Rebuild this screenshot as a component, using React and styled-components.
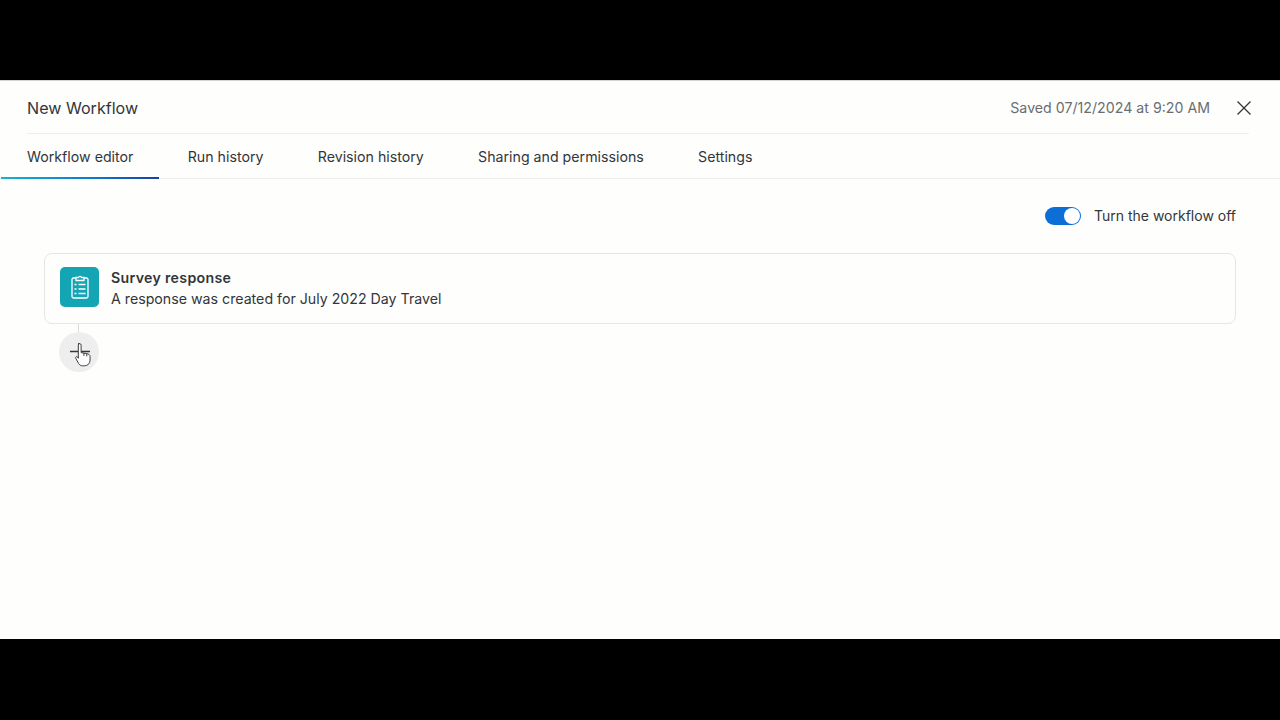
import React from "react";
import styled, { createGlobalStyle } from "styled-components";

const GlobalStyle = createGlobalStyle`
  html, body {
    margin: 0;
    padding: 0;
    background: #000;
  }
  body {
    font-family: Inter, "Open Sans", sans-serif;
  }
`;

const Page = styled.div`
  width: 1280px;
  height: 720px;
  padding: 80px 0 81px;
  box-sizing: border-box;
  background: #000;
  overflow: hidden;
`;

const Panel = styled.main`
  height: 559px;
  background: #fefefd;
  border-top: 1px solid #d4d4d4;
  box-sizing: border-box;
`;

const TitleRow = styled.header`
  height: 53px;
  margin: 0 31px 0 27px;
  display: flex;
  align-items: center;
  justify-content: space-between;
  border-bottom: 1px solid #eeeeee;
  box-sizing: border-box;
`;

const Title = styled.h1`
  margin: 0;
  padding-top: 2px;
  font-size: 16.1px;
  font-weight: 400;
  color: #32363a;
`;

const SaveBox = styled.div`
  display: flex;
  align-items: center;
  gap: 25px;
  margin-right: -4px;
`;

const Saved = styled.span`
  font-size: 14.2px;
  color: #6a6d70;
`;

const Close = styled.button`
  width: 18px;
  height: 18px;
  margin-top: 1px;
  padding: 0;
  border: 0;
  background: none;
  display: flex;
  align-items: center;
  justify-content: center;
`;

const Tabs = styled.nav`
  height: 45px;
  padding-left: 1px;
  display: flex;
  gap: 2.3px;
  border-bottom: 1px solid #eeeeee;
  box-sizing: border-box;
`;

const Tab = styled.a`
  position: relative;
  padding: 0 26px;
  display: flex;
  align-items: center;
  font-size: 14.2px;
  color: #32363a;
  white-space: nowrap;

  ${({ $active }) =>
    $active &&
    `
    &::after {
      content: "";
      position: absolute;
      left: 0;
      right: 0;
      bottom: -1px;
      height: 2px;
      background: linear-gradient(90deg, #12b5cf 0%, #0b78cf 60%, #1b3fa5 100%);
    }
  `}
`;

const Body = styled.section`
  padding: 27px 44px 0;
`;

const ToggleRow = styled.div`
  display: flex;
  align-items: center;
  justify-content: flex-end;
  gap: 13px;
  height: 20px;
  margin-bottom: 27px;
`;

const Toggle = styled.span`
  width: 36px;
  height: 18px;
  border-radius: 9px;
  background: #0b6fd6;
  display: flex;
  align-items: center;
  justify-content: flex-end;
  padding-right: 1px;
  box-sizing: border-box;
`;

const Knob = styled.span`
  width: 16px;
  height: 16px;
  border-radius: 50%;
  background: #fff;
`;

const ToggleLabel = styled.span`
  padding-bottom: 2px;
  font-size: 14px;
  color: #32363a;
`;

const Card = styled.article`
  height: 71px;
  border: 1px solid #e6e6e6;
  border-radius: 8px;
  box-sizing: border-box;
  padding: 0 15px 3px;
  display: flex;
  align-items: center;
  gap: 12px;
`;

const IconTile = styled.div`
  width: 39px;
  height: 40px;
  border-radius: 5px;
  background: #14a5b5;
  display: flex;
  align-items: center;
  justify-content: center;
`;

const CardText = styled.div`
  padding-top: 2px;
  display: flex;
  flex-direction: column;
  gap: 1px;
  font-size: 14.2px;
  line-height: 20px;
  color: #32363a;
`;

const CardTitle = styled.strong`
  font-weight: 600;
  letter-spacing: 0.3px;
`;

const AddColumn = styled.div`
  width: 40px;
  margin-left: 15px;
  display: flex;
  flex-direction: column;
  align-items: center;
`;

const Connector = styled.div`
  width: 1px;
  height: 8px;
  margin-right: 1px;
  background: #dcdcdc;
`;

const AddButton = styled.button`
  position: relative;
  width: 40px;
  height: 40px;
  padding: 0;
  border: 0;
  border-radius: 50%;
  background: #eeeeee;
  display: flex;
  align-items: center;
  justify-content: center;
`;

const Cursor = styled.svg`
  position: absolute;
  left: 16px;
  top: 11px;
`;

const ClipboardIcon = () => (
  <svg width="18" height="24" viewBox="0 0 18 24" fill="none" stroke="#fff" strokeWidth="1.3">
    <path d="M5 3H2.500A1.500 1.500 0 0 0 1 4.500V21.500A1.500 1.500 0 0 0 2.500 23h13a1.500 1.500 0 0 0 1.500-1.500V4.500A1.500 1.500 0 0 0 15.500 3H13" />
    <path d="M5 5.500V2.500h2.300a1.800 1.800 0 0 1 3.400 0H13v3z" />
    <path d="M3.500 9.500h2M3.500 14h2M3.500 18.500h2M7.500 9.500h7M7.500 14h7M7.500 18.500h7" />
  </svg>
);

const App = () => {
  return (
    <>
      <GlobalStyle />
      <Page>
        <Panel>
          <TitleRow>
            <Title>New Workflow</Title>
            <SaveBox>
              <Saved>Saved 07/12/2024 at 9:20 AM</Saved>
              <Close aria-label="Close">
                <svg width="16" height="16" viewBox="0 0 16 16" stroke="#32363a" strokeWidth="1.3">
                  <path d="M1.500 1.500l13 13M14.500 1.500l-13 13" />
                </svg>
              </Close>
            </SaveBox>
          </TitleRow>
          <Tabs>
            <Tab $active>Workflow editor</Tab>
            <Tab>Run history</Tab>
            <Tab>Revision history</Tab>
            <Tab>Sharing and permissions</Tab>
            <Tab>Settings</Tab>
          </Tabs>
          <Body>
            <ToggleRow>
              <Toggle>
                <Knob />
              </Toggle>
              <ToggleLabel>Turn the workflow off</ToggleLabel>
            </ToggleRow>
            <Card>
              <IconTile>
                <ClipboardIcon />
              </IconTile>
              <CardText>
                <CardTitle>Survey response</CardTitle>
                <span>A response was created for July 2022 Day Travel</span>
              </CardText>
            </Card>
            <AddColumn>
              <Connector />
              <AddButton aria-label="Add step">
                <svg width="22" height="22" viewBox="0 0 22 22" stroke="#32363a" strokeWidth="1.6">
                  <path d="M2 10.500h20M11 2v20" />
                </svg>
                <Cursor width="16" height="24" viewBox="0 0 17 25" fill="#fff" stroke="#32363a" strokeWidth="1">
                  <path d="M3.500 2a1.500 1.500 0 0 1 3 0V10l6 1c2 .4 3.500 1.300 3.500 3V18c0 3.500-2.500 6-6 6H8c-2 0-3.200-1-4.200-2.500L.8 16c-.7-1.500 1-2.500 2-1.300L3.500 16z" />
                  <path d="M9.500 10.500v3M12.500 11v3" />
                </Cursor>
              </AddButton>
            </AddColumn>
          </Body>
        </Panel>
      </Page>
    </>
  );
};

export default App;
